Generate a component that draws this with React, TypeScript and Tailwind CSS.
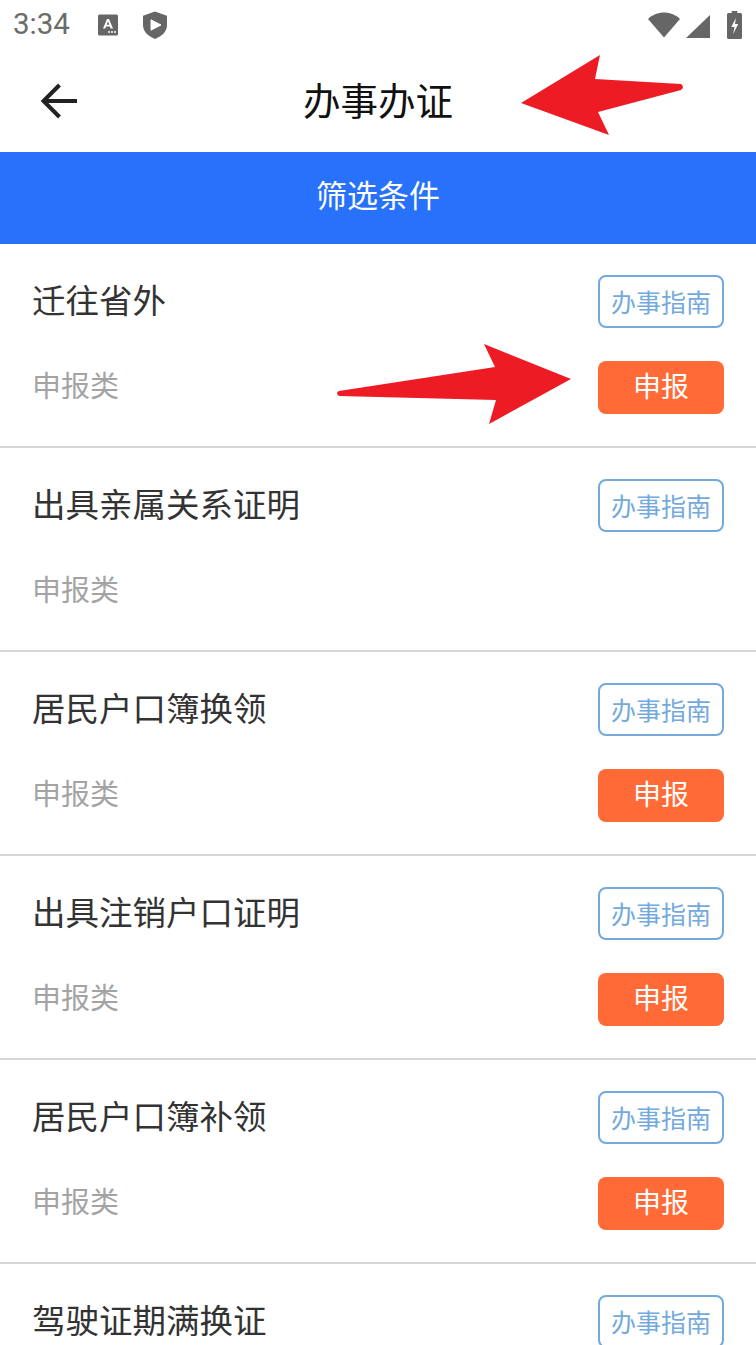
const cjk = "font-['Noto_Sans_CJK_SC','Noto_Sans',sans-serif]";

const items = [
  { title: '迁往省外', apply: true },
  { title: '出具亲属关系证明', apply: false },
  { title: '居民户口簿换领', apply: true },
  { title: '出具注销户口证明', apply: true },
  { title: '居民户口簿补领', apply: true },
  { title: '驾驶证期满换证', apply: true },
];

function StatusBar() {
  return (
    <div className="flex h-[50px] shrink-0 items-center justify-between pl-[13px] pr-[14px]">
      <div className="flex items-center">
        <span className="font-['Roboto',sans-serif] text-[29.500px] leading-none text-[#6b6b6b]">3:34</span>
        {/* keyboard notification icon */}
        <svg className="ml-[28px]" width="20" height="22" viewBox="0 0 20 22">
          <rect width="20" height="21" y="0.5" rx="1.5" fill="#666" />
          <path d="M5 14.5 9 5h2l4 9.5h-2.4l-.7-2H8l-.7 2zM8.700 10.800h2.600L10 7.200z" fill="#fff" />
          <circle cx="11" cy="18" r="1" fill="#fff" />
          <circle cx="14" cy="18" r="1" fill="#fff" />
          <circle cx="17" cy="18" r="1" fill="#fff" />
        </svg>
        {/* play protect shield */}
        <svg className="ml-[25px]" width="24" height="28" viewBox="0 0 24 30" preserveAspectRatio="none">
          <path d="M12 0.5 24 5v10c0 7-5 12-12 15C5 27 0 22 0 15V5z" fill="#666" />
          <path d="M8 9.500 18 15 8 20.500z" fill="#fff" stroke="#fff" strokeWidth="1" strokeLinejoin="round" />
        </svg>
      </div>
      <div className="flex items-center">
        <svg width="32" height="26" viewBox="0 0 32 26">
          <path d="M0 7C4 3 10 .5 16 .5S28 3 32 7L16 25.500z" fill="#666" />
        </svg>
        <svg className="ml-[6px] mt-[2px]" width="24" height="23" viewBox="0 0 24 24" preserveAspectRatio="none">
          <path d="M24 0v24H0z" fill="#666" />
        </svg>
        <svg className="ml-[17px]" width="15" height="28" viewBox="0 0 16 28" preserveAspectRatio="none">
          <path d="M5 0h6v2h3.500A1.500 1.500 0 0 1 16 3.500v23a1.500 1.500 0 0 1-1.500 1.500h-13A1.500 1.500 0 0 1 0 26.500v-23A1.500 1.500 0 0 1 1.500 2H5z" fill="#666" />
          <path d="M9.500 7 4.500 16H8l-1.500 7 5.500-10H8.500z" fill="#fff" />
        </svg>
      </div>
    </div>
  );
}

function Row({ title, apply }: { title: string; apply: boolean }) {
  return (
    <div className="flex h-[204px] shrink-0 justify-between border-b-2 border-[#d6d6d6] pl-[32px] pr-[32px] pt-[31px]">
      <div className="flex flex-col">
        <div className="h-[53px] text-[33.500px] leading-[47px] text-[#333]">{title}</div>
        <div className="mt-[32px] h-[53px] text-[29px] leading-[49px] text-[#a3a3a3]">申报类</div>
      </div>
      <div className="flex w-[126px] flex-col">
        <button className="h-[53px] rounded-[8px] border-2 border-[#74a9dc] bg-white text-[25px] leading-none text-[#74a9dc]">
          办事指南
        </button>
        {apply && (
          <button className="mt-[33px] h-[53px] rounded-[8px] bg-[#ff6a36] pb-[6px] text-[28px] leading-none text-white">
            申报
          </button>
        )}
      </div>
    </div>
  );
}

export default function App() {
  return (
    <div className={`relative flex h-[1345px] w-[756px] flex-col overflow-hidden bg-white ${cjk}`}>
      <StatusBar />
      <div className="relative flex h-[102px] shrink-0 items-center justify-center pb-[4px]">
        <svg className="absolute left-[40px] top-[33px]" width="38" height="36" viewBox="0 0 38 36" fill="none" stroke="#222" strokeWidth="4">
          <path d="M37 18H4" />
          <path d="M19.500 2 3.500 18l16 16" />
        </svg>
        <span className="text-[37.500px] leading-none text-[#111]">办事办证</span>
      </div>
      <div className="flex h-[92px] shrink-0 items-center justify-center bg-[#2871fb] pb-[8px] text-[31px] text-white">
        筛选条件
      </div>
      {items.map((item) => (
        <Row key={item.title} title={item.title} apply={item.apply} />
      ))}

      {/* red annotation arrows drawn over the screenshot */}
      <svg className="absolute left-0 top-0" width="756" height="1345" viewBox="0 0 756 1345">
        <path d="M521 103 600 55 595 79 681 84Q685 87 681 90L598 112 609 135z" fill="#ed1c24" />
        <path d="M339 391 495 367 484 344 571 379 489 424 496 400 339 396Q335 393 339 391z" fill="#ed1c24" />
      </svg>
    </div>
  );
}
